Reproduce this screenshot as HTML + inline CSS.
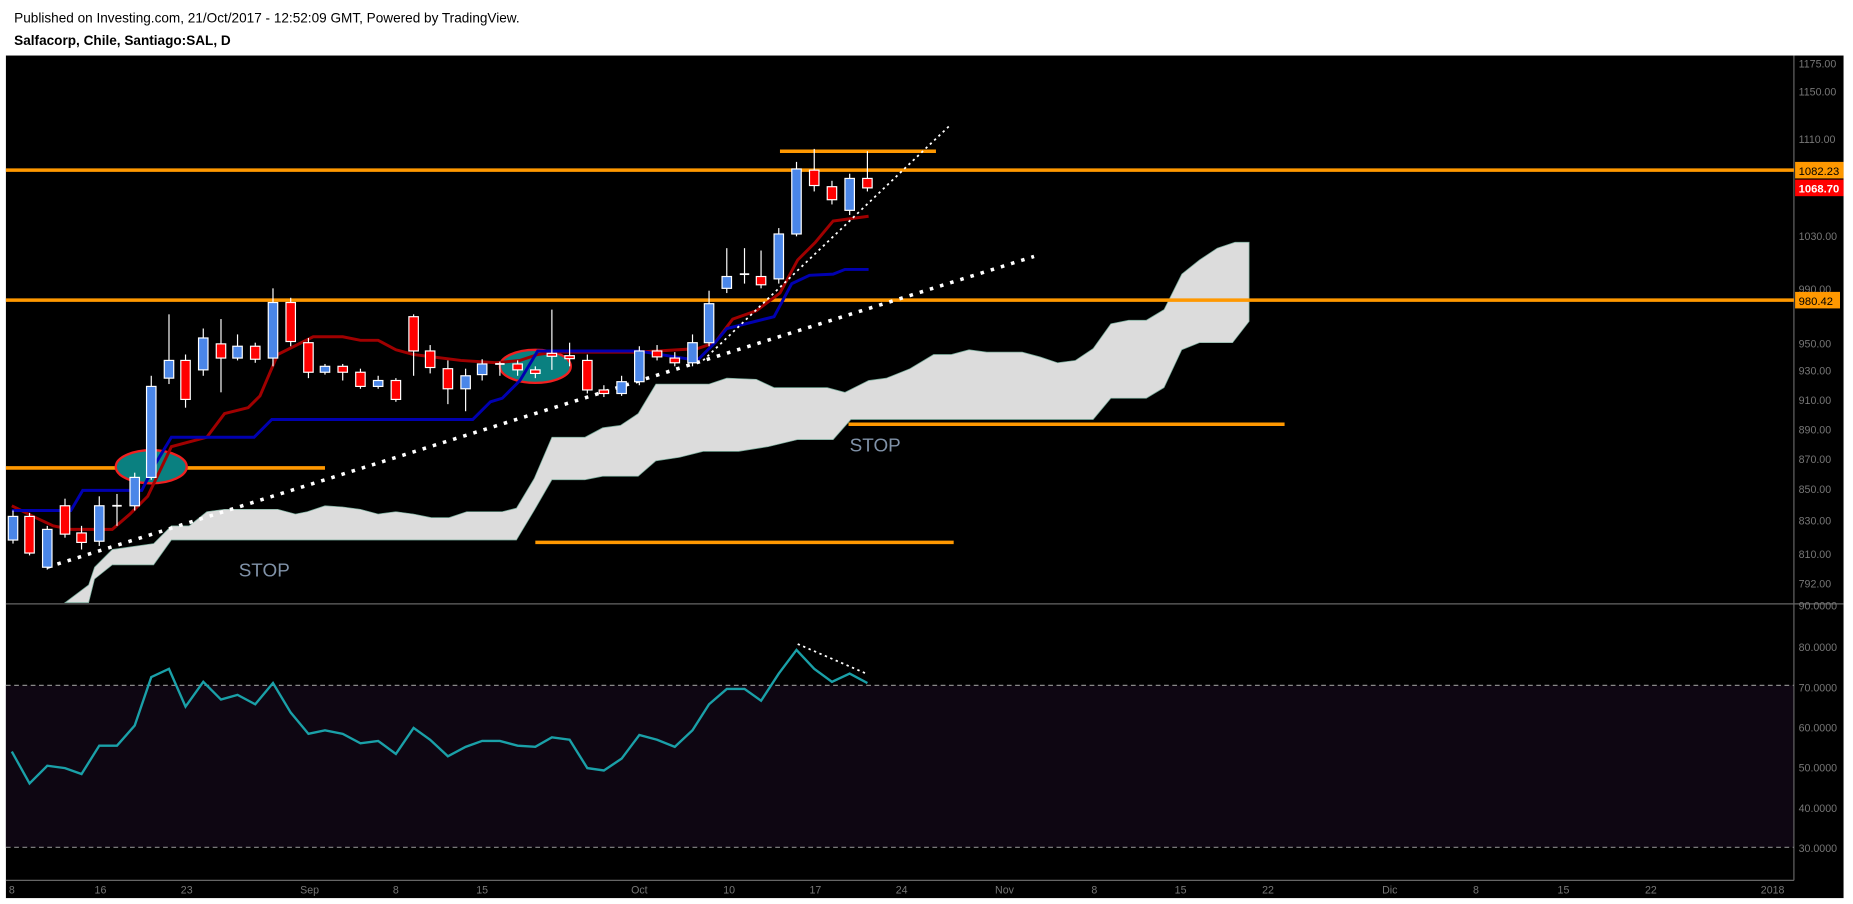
<!DOCTYPE html>
<html><head><meta charset="utf-8"><style>
html,body{margin:0;padding:0;background:#fff;width:1853px;height:904px;overflow:hidden}
svg{display:block}
text{font-family:"Liberation Sans",Arial,sans-serif}
</style></head><body>
<svg width="1853" height="904" viewBox="0 0 1568 765" preserveAspectRatio="none" xmlns="http://www.w3.org/2000/svg">
<rect width="1568" height="765" fill="#fff"/>
<text x="12" y="19" font-size="11.5" fill="#000">Published on Investing.com, 21/Oct/2017 - 12:52:09 GMT, Powered by TradingView.</text>
<text x="12" y="38" font-size="11.5" font-weight="bold" fill="#000">Salfacorp, Chile, Santiago:SAL, D</text>
<rect x="5" y="47" width="1555" height="713" fill="#000"/>
<rect x="5" y="580" width="1513" height="137" fill="#0e0612"/>
<line x1="1518" y1="47" x2="1518" y2="745" stroke="#666" stroke-width="1"/>
<line x1="5" y1="511" x2="1560" y2="511" stroke="#666" stroke-width="1"/>
<line x1="5" y1="745" x2="1518" y2="745" stroke="#666" stroke-width="1"/>
<line x1="5" y1="580" x2="1518" y2="580" stroke="#888" stroke-dasharray="4,3"/>
<line x1="5" y1="717" x2="1518" y2="717" stroke="#888" stroke-dasharray="4,3"/>
<polygon fill="#dcdcdc" stroke="#7a9" stroke-width="0.6" points="55,510 75,495 80,480 95,465 130,460 145,445 160,445 175,433 190,431 235,431 250,435 260,433 275,428 290,429 305,431 320,435 335,433 350,435 365,438 380,438 395,433 425,433 437,430 452,405 467,370 495,370 510,362 525,360 540,350 555,325 600,325 615,320 640,321 655,328 700,328 715,332 735,322 750,320 770,312 790,300 805,300 820,296 835,298 865,298 880,302 895,307 910,305 925,295 940,274 955,271 970,271 985,262 1000,232 1015,220 1030,210 1045,205 1057,205 1057,272 1043,290 1015,290 1000,296 985,328 970,337 940,337 925,355 720,355 705,372 675,372 650,378 625,382 595,382 575,387 555,390 540,403 510,403 495,406 467,406 452,432 437,457 145,457 130,478 95,478 80,490 75,510"/>
<g stroke="#ff9800" stroke-width="3">
<line x1="5" y1="144" x2="1518" y2="144"/>
<line x1="5" y1="254" x2="1518" y2="254"/>
<line x1="5" y1="396" x2="275" y2="396"/>
<line x1="660" y1="128" x2="792" y2="128"/>
<line x1="718" y1="359" x2="1087" y2="359"/>
<line x1="453" y1="459" x2="807" y2="459"/>
</g>
<ellipse cx="128" cy="395" rx="30" ry="14" fill="#0a8080" stroke="#f02020" stroke-width="2"/>
<ellipse cx="453" cy="310" rx="30" ry="14" fill="#0a8080" stroke="#f02020" stroke-width="2"/>
<polyline fill="none" stroke="#a00000" stroke-width="2.5" points="10,428 30,438 45,445 60,448 95,448 110,435 125,420 145,378 175,370 190,350 210,345 220,335 235,300 265,285 290,285 305,288 320,288 335,296 350,300 390,305 420,307 440,305 455,300 470,298 540,298 590,295 605,290 620,270 640,263 660,248 675,220 690,205 705,187 735,183"/>
<polyline fill="none" stroke="#0000b0" stroke-width="2.5" points="10,432 60,432 70,415 120,415 130,395 145,370 215,370 230,355 400,355 415,340 425,337 440,322 455,297 540,297 590,305 605,290 615,278 655,268 670,240 685,233 705,232 715,228 735,228"/>
<line x1="40" y1="480" x2="875" y2="217" stroke="#fff" stroke-width="3" stroke-dasharray="3,6"/>
<line x1="595" y1="305" x2="805" y2="105" stroke="#fff" stroke-width="1.5" stroke-dasharray="2,3"/>
<g stroke="#fff" stroke-width="1">
<line x1="11" y1="432" x2="11" y2="460"/><rect x="7" y="437" width="8" height="20" fill="#4a86e8"/>
<line x1="25" y1="434" x2="25" y2="470"/><rect x="21" y="437" width="8" height="31" fill="#f00"/>
<line x1="40" y1="445" x2="40" y2="482"/><rect x="36" y="448" width="8" height="32" fill="#4a86e8"/>
<line x1="55" y1="422" x2="55" y2="455"/><rect x="51" y="428" width="8" height="24" fill="#f00"/>
<line x1="69" y1="445" x2="69" y2="465"/><rect x="65" y="451" width="8" height="8" fill="#f00"/>
<line x1="84" y1="420" x2="84" y2="462"/><rect x="80" y="428" width="8" height="30" fill="#4a86e8"/>
<line x1="99" y1="418" x2="99" y2="445"/><line x1="95" y1="428" x2="103" y2="428" stroke-width="1.5"/>
<line x1="114" y1="400" x2="114" y2="432"/><rect x="110" y="404" width="8" height="24" fill="#4a86e8"/>
<line x1="128" y1="318" x2="128" y2="406"/><rect x="124" y="327" width="8" height="77" fill="#4a86e8"/>
<line x1="143" y1="266" x2="143" y2="325"/><rect x="139" y="305" width="8" height="15" fill="#4a86e8"/>
<line x1="157" y1="300" x2="157" y2="345"/><rect x="153" y="305" width="8" height="33" fill="#f00"/>
<line x1="172" y1="278" x2="172" y2="318"/><rect x="168" y="286" width="8" height="27" fill="#4a86e8"/>
<line x1="187" y1="270" x2="187" y2="332"/><rect x="183" y="291" width="8" height="12" fill="#f00"/>
<line x1="201" y1="283" x2="201" y2="305"/><rect x="197" y="293" width="8" height="10" fill="#4a86e8"/>
<line x1="216" y1="290" x2="216" y2="307"/><rect x="212" y="293" width="8" height="11" fill="#f00"/>
<line x1="231" y1="244" x2="231" y2="310"/><rect x="227" y="256" width="8" height="47" fill="#4a86e8"/>
<line x1="246" y1="252" x2="246" y2="293"/><rect x="242" y="256" width="8" height="33" fill="#f00"/>
<line x1="261" y1="286" x2="261" y2="320"/><rect x="257" y="290" width="8" height="25" fill="#f00"/>
<line x1="275" y1="308" x2="275" y2="317"/><rect x="271" y="310" width="8" height="5" fill="#4a86e8"/>
<line x1="290" y1="308" x2="290" y2="322"/><rect x="286" y="310" width="8" height="5" fill="#f00"/>
<line x1="305" y1="312" x2="305" y2="329"/><rect x="301" y="315" width="8" height="12" fill="#f00"/>
<line x1="320" y1="318" x2="320" y2="329"/><rect x="316" y="322" width="8" height="5" fill="#4a86e8"/>
<line x1="335" y1="320" x2="335" y2="340"/><rect x="331" y="322" width="8" height="16" fill="#f00"/>
<line x1="350" y1="266" x2="350" y2="318"/><rect x="346" y="268" width="8" height="29" fill="#f00"/>
<line x1="364" y1="292" x2="364" y2="316"/><rect x="360" y="297" width="8" height="14" fill="#f00"/>
<line x1="379" y1="305" x2="379" y2="342"/><rect x="375" y="312" width="8" height="17" fill="#f00"/>
<line x1="394" y1="312" x2="394" y2="348"/><rect x="390" y="318" width="8" height="11" fill="#4a86e8"/>
<line x1="408" y1="304" x2="408" y2="322"/><rect x="404" y="308" width="8" height="9" fill="#4a86e8"/>
<line x1="423" y1="306" x2="423" y2="318"/><line x1="419" y1="308" x2="427" y2="308" stroke-width="1.5"/>
<line x1="438" y1="305" x2="438" y2="318"/><rect x="434" y="308" width="8" height="5" fill="#f00"/>
<line x1="453" y1="310" x2="453" y2="320"/><rect x="449" y="313" width="8" height="3" fill="#f00"/>
<line x1="467" y1="262" x2="467" y2="313"/><rect x="463" y="299" width="8" height="2.5" fill="#f00"/>
<line x1="482" y1="290" x2="482" y2="310"/><rect x="478" y="301" width="8" height="2.5" fill="#f00"/>
<line x1="497" y1="300" x2="497" y2="333"/><rect x="493" y="305" width="8" height="25" fill="#f00"/>
<line x1="511" y1="326" x2="511" y2="336"/><rect x="507" y="330" width="8" height="3" fill="#f00"/>
<line x1="526" y1="318" x2="526" y2="335"/><rect x="522" y="323" width="8" height="10" fill="#4a86e8"/>
<line x1="541" y1="293" x2="541" y2="326"/><rect x="537" y="297" width="8" height="26" fill="#4a86e8"/>
<line x1="556" y1="292" x2="556" y2="305"/><rect x="552" y="297" width="8" height="5" fill="#f00"/>
<line x1="571" y1="298" x2="571" y2="310"/><rect x="567" y="303" width="8" height="4" fill="#f00"/>
<line x1="586" y1="283" x2="586" y2="310"/><rect x="582" y="290" width="8" height="17" fill="#4a86e8"/>
<line x1="600" y1="246" x2="600" y2="293"/><rect x="596" y="257" width="8" height="33" fill="#4a86e8"/>
<line x1="615" y1="210" x2="615" y2="248"/><rect x="611" y="234" width="8" height="10" fill="#4a86e8"/>
<line x1="630" y1="210" x2="630" y2="240"/><line x1="626" y1="232" x2="634" y2="232" stroke-width="1.5"/>
<line x1="644" y1="212" x2="644" y2="244"/><rect x="640" y="234" width="8" height="7" fill="#f00"/>
<line x1="659" y1="193" x2="659" y2="240"/><rect x="655" y="198" width="8" height="38" fill="#4a86e8"/>
<line x1="674" y1="137" x2="674" y2="200"/><rect x="670" y="143" width="8" height="55" fill="#4a86e8"/>
<line x1="689" y1="126" x2="689" y2="162"/><rect x="685" y="144" width="8" height="13" fill="#f00"/>
<line x1="704" y1="153" x2="704" y2="173"/><rect x="700" y="158" width="8" height="11" fill="#f00"/>
<line x1="719" y1="147" x2="719" y2="182"/><rect x="715" y="151" width="8" height="27" fill="#4a86e8"/>
<line x1="734" y1="128" x2="734" y2="162"/><rect x="730" y="151" width="8" height="8" fill="#f00"/>
</g>
<text x="202" y="488" font-size="16" fill="#8092a8">STOP</text>
<text x="719" y="382" font-size="16" fill="#8092a8">STOP</text>
<polyline fill="none" stroke="#1aa0a8" stroke-width="2" points="10,636 25,663 40,648 55,650 69,655 84,631 99,631 114,614 128,573 143,566 157,598 172,577 187,592 201,588 216,596 231,578 246,603 261,621 275,618 290,621 305,629 320,627 335,638 350,616 364,626 379,640 394,632 408,627 423,627 438,631 453,632 467,624 482,626 497,650 511,652 526,642 541,622 556,626 571,632 586,618 600,596 615,583 630,583 644,593 659,570 674,550 689,566 704,577 719,570 734,578"/>
<line x1="675" y1="545" x2="733" y2="570" stroke="#fff" stroke-width="1.5" stroke-dasharray="2,3"/>
<g font-size="9" fill="#777">
<text x="1522" y="57">1175.00</text><text x="1522" y="81">1150.00</text><text x="1522" y="121">1110.00</text>
<text x="1522" y="203">1030.00</text><text x="1522" y="248">990.00</text><text x="1522" y="294">950.00</text>
<text x="1522" y="317">930.00</text><text x="1522" y="342">910.00</text><text x="1522" y="367">890.00</text>
<text x="1522" y="392">870.00</text><text x="1522" y="417">850.00</text><text x="1522" y="444">830.00</text>
<text x="1522" y="472">810.00</text><text x="1522" y="497">792.00</text><text x="1522" y="516">90.0000</text>
<text x="1522" y="551">80.0000</text><text x="1522" y="585">70.0000</text><text x="1522" y="619">60.0000</text>
<text x="1522" y="653">50.0000</text><text x="1522" y="687">40.0000</text><text x="1522" y="721">30.0000</text>
</g>
<rect x="1519" y="137" width="41" height="14" fill="#ff9800"/><text x="1522" y="148" font-size="9.5" fill="#000">1082.23</text>
<rect x="1519" y="152" width="41" height="14" fill="#f00"/><text x="1522" y="163" font-size="9.5" font-weight="bold" fill="#fff">1068.70</text>
<rect x="1519" y="247" width="38" height="14" fill="#ff9800"/><text x="1522" y="258" font-size="9.5" fill="#000">980.42</text>
<g font-size="9" fill="#777" text-anchor="middle">
<text x="10" y="756">8</text><text x="85" y="756">16</text><text x="158" y="756">23</text><text x="262" y="756">Sep</text>
<text x="335" y="756">8</text><text x="408" y="756">15</text><text x="541" y="756">Oct</text><text x="617" y="756">10</text>
<text x="690" y="756">17</text><text x="763" y="756">24</text><text x="850" y="756">Nov</text><text x="926" y="756">8</text>
<text x="999" y="756">15</text><text x="1073" y="756">22</text><text x="1176" y="756">Dic</text><text x="1249" y="756">8</text>
<text x="1323" y="756">15</text><text x="1397" y="756">22</text><text x="1500" y="756">2018</text>
</g>
</svg>
</body></html>
